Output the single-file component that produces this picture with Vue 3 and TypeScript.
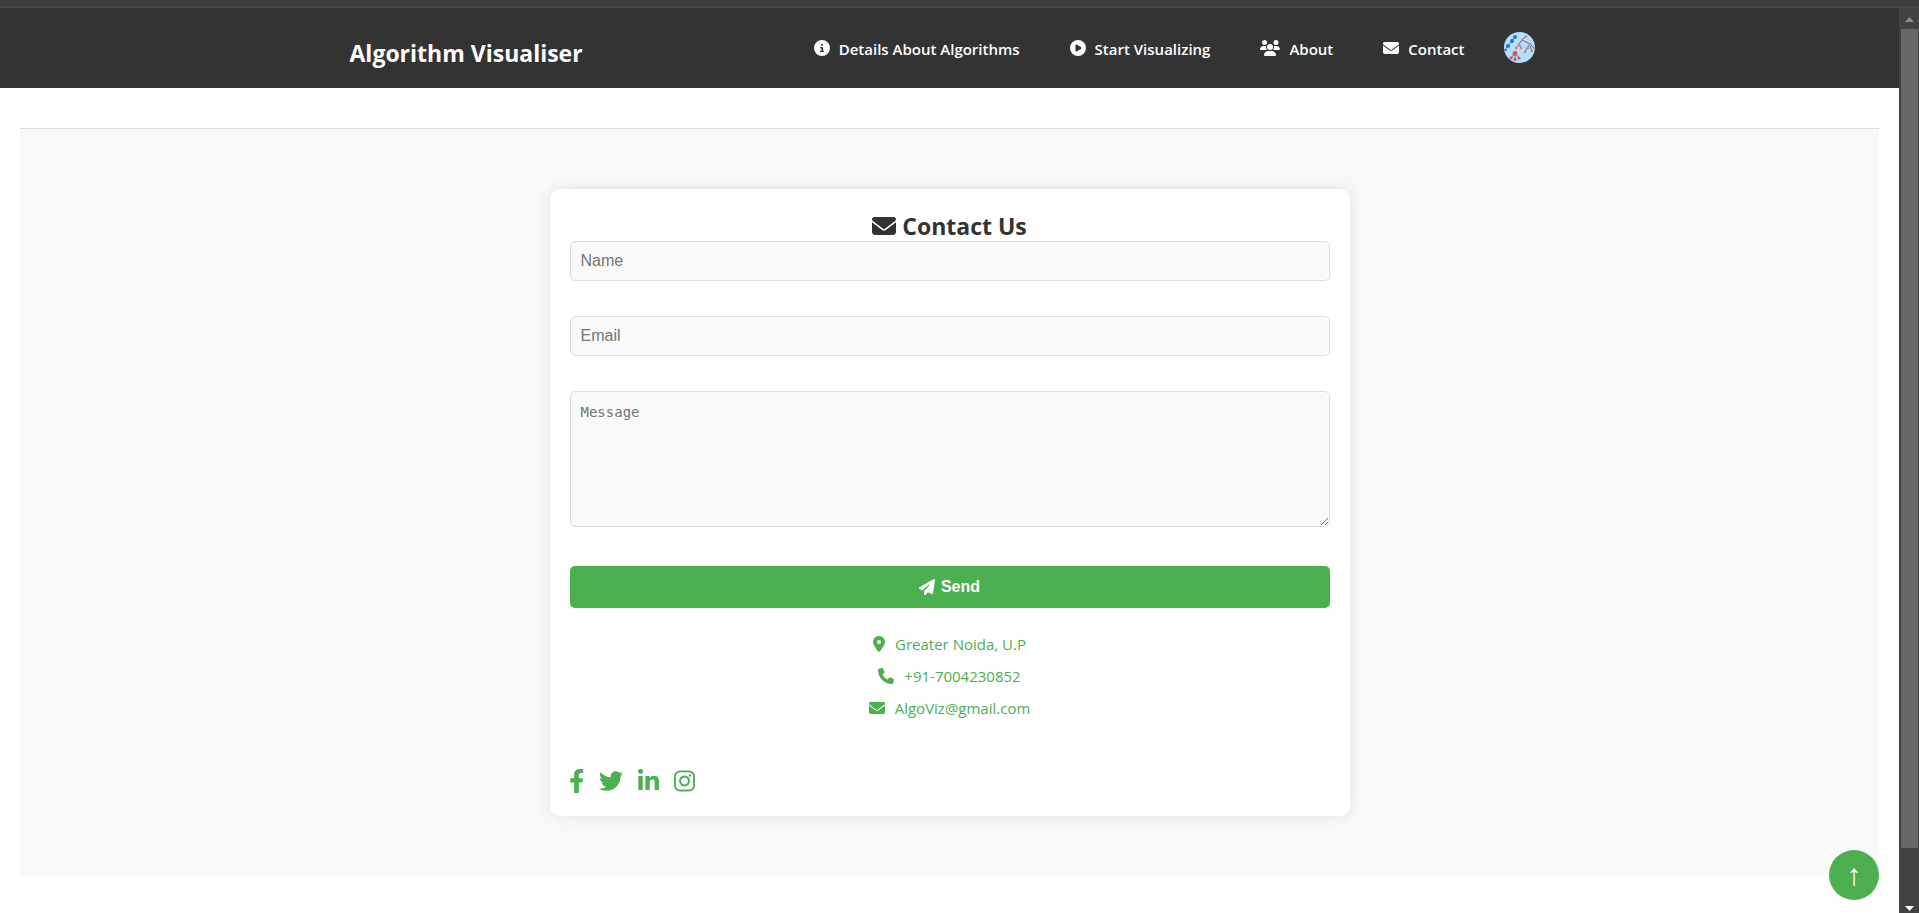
<script setup lang="ts">
interface Icon {
  box: string
  path: string
}

interface LinkItem {
  label: string
  icon: Icon
  href: string
}

const envelope: Icon = {
  box: '0 0 512 512',
  path: 'M48 64C21.5 64 0 85.5 0 112c0 15.1 7.1 29.3 19.2 38.4L236.8 313.6c11.4 8.5 27 8.5 38.4 0L492.8 150.4c12.1-9.1 19.2-23.3 19.2-38.4c0-26.5-21.5-48-48-48H48zM0 176V384c0 35.3 28.7 64 64 64H448c35.3 0 64-28.7 64-64V176L294.4 339.2c-22.8 17.1-54 17.1-76.8 0L0 176z',
}
const info: Icon = {
  box: '0 0 512 512',
  path: 'M256 512A256 256 0 1 0 256 0a256 256 0 1 0 0 512zM216 336h24V272H216c-13.3 0-24-10.7-24-24s10.7-24 24-24h48c13.3 0 24 10.7 24 24v88h8c13.3 0 24 10.7 24 24s-10.7 24-24 24H216c-13.3 0-24-10.7-24-24s10.7-24 24-24zm40-208a32 32 0 1 1 0 64 32 32 0 1 1 0-64z',
}
const play: Icon = {
  box: '0 0 512 512',
  path: 'M0 256a256 256 0 1 1 512 0A256 256 0 1 1 0 256zM188.3 147.1c-7.6 4.2-12.3 12.3-12.3 20.9V344c0 8.7 4.7 16.7 12.3 20.9s16.8 4.1 24.3-.5l144-88c7.1-4.4 11.5-12.1 11.5-20.5s-4.4-16.1-11.5-20.5l-144-88c-7.4-4.5-16.7-4.7-24.3-.5z',
}
const users: Icon = {
  box: '0 0 640 512',
  path: 'M144 0a80 80 0 1 1 0 160A80 80 0 1 1 144 0zM512 0a80 80 0 1 1 0 160A80 80 0 1 1 512 0zM0 298.7C0 239.8 47.8 192 106.7 192h42.7c15.9 0 31 3.5 44.6 9.7c-1.3 7.2-1.9 14.7-1.9 22.3c0 38.2 16.8 72.5 43.3 96c-.2 0-.4 0-.7 0H21.3C9.6 320 0 310.4 0 298.7zM405.3 320c-.2 0-.4 0-.7 0c26.6-23.5 43.3-57.8 43.3-96c0-7.6-.7-15-1.9-22.3c13.6-6.3 28.7-9.7 44.6-9.7h42.7C592.2 192 640 239.8 640 298.7c0 11.8-9.6 21.3-21.3 21.3H405.3zM224 224a96 96 0 1 1 192 0 96 96 0 1 1 -192 0zM128 485.3C128 411.7 187.7 352 261.3 352H378.7C452.3 352 512 411.7 512 485.3c0 14.7-11.9 26.7-26.7 26.7H154.7c-14.7 0-26.7-11.9-26.7-26.7z',
}
const plane: Icon = {
  box: '0 0 512 512',
  path: 'M498.1 5.6c10.1 7 15.4 19.1 13.5 31.2l-64 416c-1.5 9.7-7.4 18.2-16 23s-18.9 5.4-28 1.6L284 427.7l-68.5 74.1c-8.9 9.7-22.9 12.9-35.2 8.1S160 493.2 160 480V396.4c0-4 1.5-7.8 4.2-10.7L331.8 202.8c5.8-6.3 5.6-16-.4-22s-15.7-6.4-22-.7L106 360.8 17.7 316.6C7.1 311.3 .3 300.7 0 288.9s5.9-22.8 16.1-28.7l448-256c10.7-6.1 23.9-5.5 34 1.4z',
}
const pin: Icon = {
  box: '0 0 384 512',
  path: 'M215.7 499.2C267 435 384 279.4 384 192C384 86 298 0 192 0S0 86 0 192c0 87.4 117 243 168.3 307.2c12.3 15.3 35.1 15.3 47.4 0zM192 128a64 64 0 1 1 0 128 64 64 0 1 1 0-128z',
}
const phone: Icon = {
  box: '0 0 512 512',
  path: 'M164.9 24.6c-7.7-18.6-28-28.5-47.4-23.2l-88 24C12.1 30.2 0 46 0 64C0 311.4 200.6 512 448 512c18 0 33.8-12.1 38.6-29.5l24-88c5.3-19.4-4.6-39.7-23.2-47.4l-96-40c-16.3-6.8-35.2-2.1-46.3 11.6L304.7 368C234.3 334.7 177.3 277.7 144 207.3L193.3 167c13.7-11.2 18.4-30 11.6-46.3l-40-96z',
}

const navItems: LinkItem[] = [
  { label: 'Details About Algorithms', icon: info, href: '#details' },
  { label: 'Start Visualizing', icon: play, href: '#start' },
  { label: 'About', icon: users, href: '#about' },
  { label: 'Contact', icon: envelope, href: '#contact' },
]

const details: LinkItem[] = [
  { label: 'Greater Noida, U.P', icon: pin, href: '#location' },
  { label: '+91-7004230852', icon: phone, href: 'tel:+917004230852' },
  { label: 'AlgoViz@gmail.com', icon: envelope, href: 'mailto:AlgoViz@gmail.com' },
]

const socials: LinkItem[] = [
  {
    label: 'Facebook',
    href: '#facebook',
    icon: {
      box: '16 0 304 512',
      path: 'M279.14 288l14.22-92.66h-88.91v-60.13c0-25.35 12.42-50.06 52.24-50.06h40.42V6.26S260.43 0 225.36 0c-73.22 0-121.08 44.38-121.08 124.72v70.62H22.89V288h81.39v224h100.17V288z',
    },
  },
  {
    label: 'Twitter',
    href: '#twitter',
    icon: {
      box: '0 0 512 512',
      path: 'M459.37 151.716c.325 4.548.325 9.097.325 13.645 0 138.72-105.583 298.558-298.558 298.558-59.452 0-114.68-17.219-161.137-47.106 8.447.974 16.568 1.299 25.34 1.299 49.055 0 94.213-16.568 130.274-44.832-46.132-.975-84.792-31.188-98.112-72.772 6.498.974 12.995 1.624 19.818 1.624 9.421 0 18.843-1.3 27.614-3.573-48.081-9.747-84.143-51.98-84.143-102.985v-1.299c13.969 7.797 30.214 12.67 47.431 13.319-28.264-18.843-46.781-51.005-46.781-87.391 0-19.492 5.197-37.36 14.294-52.954 51.655 63.675 129.3 105.258 216.365 109.807-1.624-7.797-2.599-15.918-2.599-24.04 0-57.828 46.782-104.934 104.934-104.934 30.213 0 57.502 12.67 76.67 33.137 23.715-4.548 46.456-13.32 66.599-25.34-7.798 24.366-24.366 44.833-46.132 57.827 21.117-2.273 41.584-8.122 60.426-16.243-14.292 20.791-32.161 39.308-52.628 54.253z',
    },
  },
  {
    label: 'LinkedIn',
    href: '#linkedin',
    icon: {
      box: '0 0 448 512',
      path: 'M100.28 448H7.4V148.9h92.88zM53.79 108.1C24.09 108.1 0 83.5 0 53.8a53.79 53.79 0 0 1 107.58 0c0 29.7-24.1 54.3-53.79 54.3zM447.9 448h-92.68V302.4c0-34.7-.7-79.2-48.29-79.2-48.29 0-55.69 37.7-55.69 76.7V448h-92.78V148.9h89.08v40.8h1.3c12.4-23.5 42.69-48.3 87.88-48.3 94 0 111.28 61.9 111.28 142.3V448z',
    },
  },
  {
    label: 'Instagram',
    href: '#instagram',
    icon: {
      box: '0 0 448 512',
      path: 'M224.1 141c-63.6 0-114.9 51.3-114.9 114.9s51.3 114.9 114.9 114.9S339 319.5 339 255.9 287.7 141 224.1 141zm0 189.6c-41.1 0-74.7-33.5-74.7-74.7s33.5-74.7 74.7-74.7 74.7 33.5 74.7 74.7-33.6 74.7-74.7 74.7zm146.4-194.3c0 14.9-12 26.8-26.8 26.8-14.9 0-26.8-12-26.8-26.8s12-26.8 26.8-26.8 26.8 12 26.8 26.8zm76.1 27.2c-1.7-35.9-9.9-67.7-36.2-93.9-26.2-26.2-58-34.4-93.9-36.2-37-2.1-147.9-2.1-184.9 0-35.8 1.7-67.6 9.9-93.9 36.1s-34.4 58-36.2 93.9c-2.1 37-2.1 147.9 0 184.9 1.7 35.9 9.9 67.7 36.2 93.9s58 34.4 93.9 36.2c37 2.1 147.9 2.1 184.9 0 35.9-1.7 67.7-9.9 93.9-36.2 26.2-26.2 34.4-58 36.2-93.9 2.1-37 2.1-147.8 0-184.8zM398.8 388c-7.8 19.6-22.9 34.7-42.6 42.6-29.5 11.7-99.5 9-132.1 9s-102.7 2.6-132.1-9c-19.6-7.8-34.7-22.9-42.6-42.6-11.7-29.5-9-99.5-9-132.1s-2.6-102.7 9-132.1c7.8-19.6 22.9-34.7 42.6-42.6 29.5-11.7 99.5-9 132.1-9s102.7-2.6 132.1 9c19.6 7.8 34.7 22.9 42.6 42.6 11.7 29.5 9 99.5 9 132.1s2.7 102.7-9 132.1z',
    },
  },
]
</script>

<template>
  <div class="window">
    <div class="strip"></div>
    <div class="view">
      <div class="page">
        <header class="bar">
          <div class="bar-inner">
            <a class="brand" href="#home">Algorithm Visualiser</a>
            <nav class="nav">
              <a v-for="item in navItems" :key="item.label" class="nav-link" :href="item.href">
                <svg class="icon" :viewBox="item.icon.box" aria-hidden="true"><path :d="item.icon.path" /></svg>
                <span>{{ item.label }}</span>
              </a>
              <a class="avatar" href="#profile" aria-label="Profile">
                <svg viewBox="0 0 31 31" aria-hidden="true">
                  <circle cx="15.5" cy="15.5" r="15.5" fill="#b3defc" />
                  <g fill="none" stroke="#5a6a8c" stroke-width="1">
                    <path d="M1 18L4 14L8 9L12 4" stroke="#4a90d0" />
                    <path d="M22 4L18 8L15 12L12 16M15 12L17 16M18 8L26 12L23 16L21 20M26 12L30 16M26 14L28 19" />
                    <path d="M11 21L7 26M11 21V27M11 21L15 26" />
                  </g>
                  <g fill="#1f74d0">
                    <circle cx="11" cy="5" r="2" /><circle cx="8" cy="9" r="2" />
                    <circle cx="4" cy="14" r="2" /><circle cx="1.5" cy="18" r="1.2" />
                  </g>
                  <g fill="#d98272">
                    <circle cx="22" cy="4.5" r="1.3" /><circle cx="18" cy="8" r="1.3" />
                    <circle cx="15" cy="12" r="1.3" /><circle cx="12" cy="16" r="1.3" />
                    <circle cx="17" cy="16" r="1.3" /><circle cx="26" cy="12" r="1.3" />
                    <circle cx="24" cy="16" r="1.3" /><circle cx="21" cy="20" r="1.3" />
                    <circle cx="28" cy="19" r="1.3" /><circle cx="30" cy="16" r="1" />
                  </g>
                  <circle cx="11" cy="21.5" r="2.4" fill="#f04a4a" />
                  <g fill="#c9566a">
                    <circle cx="7" cy="26" r="1.6" /><circle cx="11" cy="27.5" r="1.6" /><circle cx="15" cy="26" r="1.6" />
                  </g>
                </svg>
              </a>
            </nav>
          </div>
        </header>

        <main class="contact">
          <section class="card">
            <h1 class="title">
              <svg class="icon" :viewBox="envelope.box" aria-hidden="true"><path :d="envelope.path" /></svg>
              <span>Contact Us</span>
            </h1>
            <form class="form" @submit.prevent>
              <input class="field" type="text" placeholder="Name" aria-label="Name" />
              <input class="field" type="email" placeholder="Email" aria-label="Email" />
              <textarea class="field message" placeholder="Message" aria-label="Message"></textarea>
              <button class="send" type="submit">
                <svg class="icon" :viewBox="plane.box" aria-hidden="true"><path :d="plane.path" /></svg>
                <span>Send</span>
              </button>
            </form>
            <address class="details">
              <a v-for="item in details" :key="item.label" class="detail" :href="item.href">
                <svg class="icon" :viewBox="item.icon.box" aria-hidden="true"><path :d="item.icon.path" /></svg>
                <span>{{ item.label }}</span>
              </a>
            </address>
            <div class="socials">
              <a v-for="item in socials" :key="item.label" :href="item.href" :aria-label="item.label">
                <svg class="icon" :viewBox="item.icon.box" aria-hidden="true"><path :d="item.icon.path" /></svg>
              </a>
            </div>
          </section>
        </main>
        <button class="to-top" type="button" aria-label="Back to top">↑</button>
      </div>

      <div class="scrollbar" aria-hidden="true">
        <svg class="arrow" viewBox="0 0 9 5"><path d="M4.5 0L9 5H0z" fill="#8c8c8c" /></svg>
        <div class="thumb"></div>
        <div class="rest"></div>
        <svg class="arrow" viewBox="0 0 9 5"><path d="M0 0H9L4.5 5z" fill="#fff" /></svg>
      </div>
    </div>
  </div>
</template>

<style>
body {
  margin: 0;
  background: #fff;
}
</style>

<style scoped>
* {
  box-sizing: border-box;
}

.window {
  display: flex;
  flex-direction: column;
  min-height: 100vh;
  font-family: "Open Sans", "Noto Sans", sans-serif;
  color: #333;
}

.strip {
  height: 8px;
  background: #3c3c3c;
  border-bottom: 2px solid #484848;
}

.view {
  display: flex;
  flex: 1;
}

.page {
  position: relative;
  flex: 1;
}

.icon {
  display: block;
  height: 16px;
  fill: currentColor;
}

.bar {
  padding: 0 20px;
  background: #333;
}

.bar-inner {
  display: flex;
  justify-content: space-between;
  max-width: 1200px;
  height: 80px;
  margin: 0 auto;
  color: #fff;
}

.brand {
  padding-top: 28px;
  font-size: 23px;
  font-weight: 700;
  line-height: 34px;
  color: inherit;
  text-decoration: none;
}

.nav {
  display: flex;
  align-items: flex-start;
  gap: 50px;
  padding: 24px 15px 0 0;
}

.nav-link {
  display: flex;
  gap: 9px;
  font-size: 15px;
  font-weight: 600;
  line-height: 34px;
  color: inherit;
  text-decoration: none;
}

.nav-link .icon {
  margin-top: 8px;
}

.avatar {
  margin-left: -11px;
}

.avatar svg {
  display: block;
  width: 31px;
  height: 31px;
}

.contact {
  margin: 40px 20px 37px;
  padding: 60px 20px;
  background: #f9f9f9;
  border-top: 1px solid #ddd;
}

.card {
  max-width: 800px;
  margin: 0 auto;
  padding: 20px;
  background: #fff;
  border-radius: 10px;
  box-shadow: 0 0 15px rgba(0, 0, 0, 0.1);
}

.title {
  display: flex;
  align-items: center;
  justify-content: center;
  gap: 6px;
  margin: 0;
  padding-top: 2px;
  font-size: 23px;
  font-weight: 700;
  line-height: 30px;
}

.title .icon {
  height: 24px;
}

.form {
  display: flex;
  flex-direction: column;
}

.field {
  height: 40px;
  margin: 0 0 35px;
  padding: 10px;
  border: 1px solid #ddd;
  border-radius: 5px;
  background: #f9f9f9;
  font-family: "Liberation Sans", Arial, sans-serif;
  font-size: 16px;
}

.field::placeholder {
  color: #757575;
}

.message {
  height: 136px;
  margin-bottom: 39px;
  padding: 12px 10px;
  font-family: "DejaVu Sans Mono", monospace;
  font-size: 14px;
  resize: vertical;
}

.send {
  display: flex;
  align-items: center;
  justify-content: center;
  gap: 6px;
  height: 42px;
  border: 0;
  border-radius: 5px;
  background: #4caf50;
  color: #fff;
  font-family: "Liberation Sans", Arial, sans-serif;
  font-size: 16px;
  font-weight: 700;
}

.details {
  display: flex;
  flex-direction: column;
  align-items: center;
  margin: 20px 0 45px;
  font-style: normal;
}

.detail {
  display: flex;
  align-items: center;
  gap: 10px;
  font-size: 15px;
  line-height: 32px;
  color: #4caf50;
  text-decoration: none;
}

.socials {
  display: flex;
  gap: 15px;
  padding-bottom: 3px;
  color: #4caf50;
}

.socials a {
  color: inherit;
}

.socials .icon {
  height: 24px;
}

.to-top {
  position: absolute;
  right: 20px;
  bottom: 13px;
  width: 50px;
  height: 50px;
  padding: 0;
  border: 0;
  border-radius: 50%;
  background: #4caf50;
  color: #fff;
  font-family: "Liberation Serif", serif;
  font-size: 30px;
}

.scrollbar {
  display: flex;
  flex-direction: column;
  align-items: center;
  width: 20px;
  padding: 9px 1px 2px 2px;
  background: #424242;
}

.arrow {
  width: 9px;
  height: 5px;
}

.thumb {
  flex: 819;
  width: 17px;
  margin-top: 7px;
  background: #686868;
}

.rest {
  flex: 58;
}
</style>
